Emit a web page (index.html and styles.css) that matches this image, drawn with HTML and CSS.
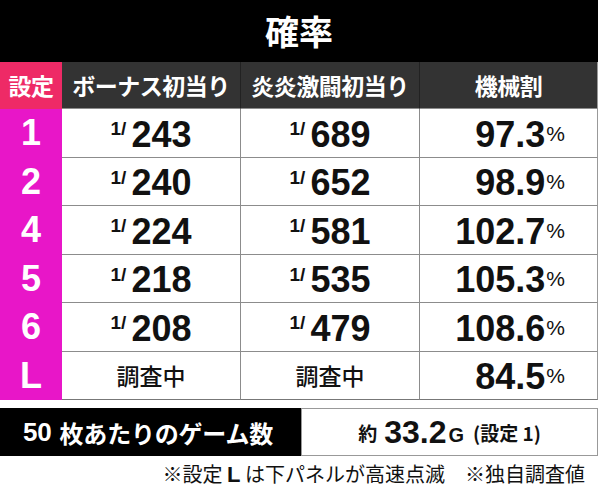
FILE: index.html
```html
<!DOCTYPE html>
<html lang="ja">
<head>
    <meta charset="UTF-8">
    <meta name="viewport" content="width=device-width, initial-scale=1.0">
    <title>確率</title>
    <link rel="stylesheet" href="styles.css">
</head>
<body>
    <div class="sheet">
        <div class="rate-table">
            <div class="title">確率</div>

            <div class="head head-setting">設定</div>
            <div class="head">ボーナス初当り</div>
            <div class="head">炎炎激闘初当り</div>
            <div class="head head-last">機械割</div>

            <div class="setting">1</div>
            <div class="cell"><span class="frac">1/</span><span class="num">243</span></div>
            <div class="cell"><span class="frac">1/</span><span class="num">689</span></div>
            <div class="cell pay"><span class="num">97.3</span><span class="pct">%</span></div>

            <div class="setting">2</div>
            <div class="cell"><span class="frac">1/</span><span class="num">240</span></div>
            <div class="cell"><span class="frac">1/</span><span class="num">652</span></div>
            <div class="cell pay"><span class="num">98.9</span><span class="pct">%</span></div>

            <div class="setting">4</div>
            <div class="cell"><span class="frac">1/</span><span class="num">224</span></div>
            <div class="cell"><span class="frac">1/</span><span class="num">581</span></div>
            <div class="cell pay"><span class="num">102.7</span><span class="pct">%</span></div>

            <div class="setting">5</div>
            <div class="cell"><span class="frac">1/</span><span class="num">218</span></div>
            <div class="cell"><span class="frac">1/</span><span class="num">535</span></div>
            <div class="cell pay"><span class="num">105.3</span><span class="pct">%</span></div>

            <div class="setting">6</div>
            <div class="cell"><span class="frac">1/</span><span class="num">208</span></div>
            <div class="cell"><span class="frac">1/</span><span class="num">479</span></div>
            <div class="cell pay"><span class="num">108.6</span><span class="pct">%</span></div>

            <div class="setting">L</div>
            <div class="cell survey">調査中</div>
            <div class="cell survey">調査中</div>
            <div class="cell pay"><span class="num">84.5</span><span class="pct">%</span></div>
        </div>

        <div class="games">
            <div class="games-label"><span class="lat">50</span><span>枚あたりのゲーム数</span></div>
            <div class="games-value">
                <span class="approx">約</span>
                <span class="big">33.2</span><span class="unit">G</span>
                <span class="note">(設定 1)</span>
            </div>
        </div>

        <p class="footnote">※設定 <b>L</b> は下パネルが高速点滅<span class="gap"></span>※独自調査値</p>
    </div>
</body>
</html>
```

FILE: styles.css
```css
:root {
    --pink: #ee2a66;
    --magenta: #e816c8;
    --line: #8c8c8c;
    --jp: "Noto Sans CJK JP", "Noto Sans", sans-serif;
    --num: "Liberation Sans", Arial, sans-serif;
}

body {
    margin: 0;
    background: #fff;
    font-family: var(--jp);
    color: #111;
}

.sheet {
    width: 598px;
}

.rate-table {
    display: grid;
    grid-template-columns: 62px 179px 179px 178px;
    grid-template-rows: 62px 47px repeat(6, 48.5px);
}

.title {
    grid-column: 1 / -1;
    background: #000;
    color: #fff;
    font-size: 34px;
    font-weight: 700;
    display: flex;
    align-items: center;
    justify-content: center;
    padding-bottom: 2px;
}

.head {
    background: #333;
    color: #fff;
    font-size: 23px;
    font-weight: 700;
    letter-spacing: -0.5px;
    display: flex;
    align-items: center;
    justify-content: center;
    border-right: 1px solid #222;
    border-bottom: 1px solid var(--line);
}

.head-setting {
    background: var(--pink);
    border-right: none;
    border-bottom-color: var(--pink);
}

.head-last {
    border-right: 1px solid #999;
}

.setting {
    background: var(--magenta);
    color: #fff;
    font-family: var(--num);
    font-weight: 700;
    font-size: 36px;
    display: flex;
    align-items: center;
    justify-content: center;
}

.cell {
    display: flex;
    align-items: center;
    justify-content: center;
    border-right: 1px solid var(--line);
    border-bottom: 1px solid var(--line);
    font-family: var(--num);
    font-weight: 700;
}

.rate-table > .cell:nth-last-child(-n+3) {
    border-bottom-color: #777;
}

.frac {
    font-size: 19px;
    align-self: flex-start;
    margin-top: 9px;
    margin-right: 5px;
}

.num {
    font-size: 36px;
    line-height: 1;
    padding-top: 4px;
}

.pay {
    justify-content: flex-end;
    padding-right: 32px;
    border-right-color: #999;
}

.pct {
    font-size: 21px;
    font-weight: 400;
    align-self: flex-end;
    margin-bottom: 11px;
    margin-left: 1px;
}

.survey {
    font-family: var(--jp);
    font-weight: 500;
    font-size: 23px;
}

.games {
    display: flex;
    margin-top: 8px;
    height: 48px;
}

.games-label {
    width: 301px;
    box-sizing: border-box;
    background: #000;
    color: #fff;
    font-size: 24px;
    font-weight: 700;
    display: flex;
    align-items: center;
    padding-left: 23px;
    letter-spacing: -0.2px;
}

.lat {
    font-family: var(--num);
    font-size: 26px;
    margin-right: 8px;
}

.games-value {
    flex: 1;
    border: 1px solid #999;
    display: flex;
    align-items: center;
    justify-content: center;
    font-weight: 700;
    gap: 2px;
}

.approx {
    font-size: 19px;
    margin-right: 5px;
}

.big {
    font-family: var(--num);
    font-size: 32px;
}

.unit {
    font-family: var(--num);
    font-size: 20px;
    margin-top: 6px;
    margin-right: 7px;
}

.note {
    font-size: 19px;
}

.footnote {
    margin: 4px 13px 0 0;
    text-align: right;
    font-size: 20px;
    line-height: 28px;
}

.footnote b {
    font-family: var(--num);
    font-size: 22px;
}

.gap {
    display: inline-block;
    width: 20px;
}
```
